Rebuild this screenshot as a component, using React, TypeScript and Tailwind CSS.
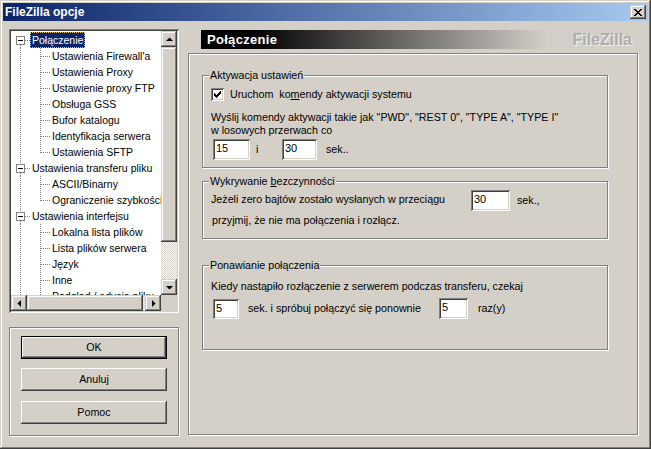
import React from "react";

const raised =
  "bg-[#d4d0c8] shadow-[inset_-1px_-1px_0_#404040,inset_1px_1px_0_#fff,inset_-2px_-2px_0_#808080,inset_2px_2px_0_#d4d0c8]";
const scrollBtn =
  "bg-[#d4d0c8] shadow-[inset_-1px_-1px_0_#404040,inset_1px_1px_0_#d4d0c8,inset_-2px_-2px_0_#808080,inset_2px_2px_0_#fff]";
const sunken =
  "shadow-[inset_1px_1px_0_#808080,inset_-1px_-1px_0_#fff,inset_2px_2px_0_#404040,inset_-2px_-2px_0_#d4d0c8]";
const etched = "border border-[#808080] shadow-[inset_1px_1px_0_#fff,1px_1px_0_#fff]";

type Row = { t: string; lvl: 0 | 1; sel?: boolean; first?: boolean; last?: boolean };

const rows: Row[] = [
  { t: "Połączenie", lvl: 0, sel: true, first: true },
  { t: "Ustawienia Firewall'a", lvl: 1 },
  { t: "Ustawienia Proxy", lvl: 1 },
  { t: "Ustawienie proxy FTP", lvl: 1 },
  { t: "Obsługa GSS", lvl: 1 },
  { t: "Bufor katalogu", lvl: 1 },
  { t: "Identyfikacja serwera", lvl: 1 },
  { t: "Ustawienia SFTP", lvl: 1, last: true },
  { t: "Ustawienia transferu pliku", lvl: 0 },
  { t: "ASCII/Binarny", lvl: 1 },
  { t: "Ograniczenie szybkości", lvl: 1, last: true },
  { t: "Ustawienia interfejsu", lvl: 0 },
  { t: "Lokalna lista plików", lvl: 1 },
  { t: "Lista plików serwera", lvl: 1 },
  { t: "Język", lvl: 1 },
  { t: "Inne", lvl: 1 },
  { t: "Podgląd / edycja pliku", lvl: 1 },
];

function Connector({ row }: { row: Row }) {
  const dot = { stroke: "#808080", strokeDasharray: "1 1", shapeRendering: "crispEdges" as const };
  if (row.lvl === 0) {
    return (
      <svg width="19" height="16" className="shrink-0">
        {!row.first && <line x1="9.5" y1="0" x2="9.5" y2="4" {...dot} />}
        <line x1="9.5" y1="13" x2="9.5" y2="16" {...dot} />
        <line x1="14" y1="8.5" x2="19" y2="8.5" {...dot} />
        <rect x="5.5" y="4.5" width="8" height="8" fill="#fff" stroke="#808080" shapeRendering="crispEdges" />
        <line x1="7" y1="8.5" x2="12" y2="8.5" stroke="#000" shapeRendering="crispEdges" />
      </svg>
    );
  }
  return (
    <svg width="39" height="16" className="shrink-0">
      <line x1="9.5" y1="0" x2="9.5" y2="16" {...dot} />
      <line x1="29.5" y1="0" x2="29.5" y2={row.last ? 9 : 16} {...dot} />
      <line x1="30" y1="8.5" x2="39" y2="8.5" {...dot} />
    </svg>
  );
}

function Arrow({ dir }: { dir: "up" | "down" | "left" | "right" }) {
  const pts = {
    up: "4,9 11,9 7.5,5.5",
    down: "4,6 11,6 7.5,9.5",
    left: "9,4 9,11 5.5,7.5",
    right: "6,4 6,11 9.5,7.5",
  }[dir];
  return (
    <svg width="15" height="15">
      <polygon points={pts} fill="#000" />
    </svg>
  );
}

function Field({ value, w, h = 21 }: { value: string; w: number; h?: number }) {
  return (
    <div
      className={`bg-white ${sunken} pl-[3px] pt-[2px] leading-[14px] text-[11px] text-black shrink-0`}
      style={{ width: w, height: h }}
    >
      {value}
    </div>
  );
}

function Group({ label, className, children }: { label: React.ReactNode; className: string; children: React.ReactNode }) {
  return (
    <div className={`relative w-[406px] ${etched} ${className}`}>
      <span className="absolute left-[6px] top-[-7px] bg-[#d4d0c8] px-[1px] leading-[13px]">{label}</span>
      {children}
    </div>
  );
}

function Button({ label, def }: { label: string; def?: boolean }) {
  return (
    <div className={`w-[146px] h-[23px] ${def ? "border border-black" : ""}`}>
      <div className={`h-full w-full flex items-center justify-center ${raised}`}>{label}</div>
    </div>
  );
}

export default function App() {
  return (
    <div className="w-[651px] h-[449px] bg-[#d4d0c8] p-[3px] shadow-[inset_-1px_-1px_0_#404040,inset_1px_1px_0_#d4d0c8,inset_-2px_-2px_0_#808080,inset_2px_2px_0_#fff] font-['Liberation_Sans',Arial,sans-serif] text-[10.7px] text-black overflow-hidden">
      {/* title bar */}
      <div className="h-[18px] flex items-center bg-[linear-gradient(to_right,#0a246a,#a6caf0)]">
        <span className="pl-[2px] text-white font-bold text-[12px] leading-[18px]">FileZilla opcje</span>
        <div className={`ml-auto mr-[2px] w-[16px] h-[14px] flex items-center justify-center ${scrollBtn}`}>
          <svg width="8" height="7" shapeRendering="crispEdges">
            <path d="M0 0h2v1h-2zM6 0h2v1h-2zM1 1h2v1h-2zM5 1h2v1h-2zM2 2h4v1h-4zM3 3h2v1h-2zM2 4h4v1h-4zM1 5h2v1h-2zM5 5h2v1h-2zM0 6h2v1h-2zM6 6h2v1h-2z" fill="#000" />
          </svg>
        </div>
      </div>

      <div className="flex pt-[8px] pl-[6px] gap-[9px]">
        {/* left column */}
        <div className="w-[170px] flex flex-col">
          <div className={`h-[284px] p-[2px] bg-[#d4d0c8] ${sunken}`}>
            <div className="grid grid-cols-[150px_16px] grid-rows-[264px_16px]">
              <div className="bg-white overflow-hidden pt-[1px] text-[10.5px]">
                {rows.map((r) => (
                  <div key={r.t} className="h-[16px] flex items-center whitespace-nowrap">
                    <Connector row={r} />
                    <span
                      className={`px-[2px] leading-[14px] h-[16px] flex items-center ${
                        r.sel ? "bg-[#0a246a] text-white outline-1 outline-dotted outline-[#e0c070] -outline-offset-1" : ""
                      }`}
                    >
                      {r.t}
                    </span>
                  </div>
                ))}
              </div>
              <div className="flex flex-col">
                <div className={`h-[16px] flex items-center justify-center ${scrollBtn}`}>
                  <Arrow dir="up" />
                </div>
                <div className={`h-[195px] ${scrollBtn}`} />
                <div className="flex-1 bg-[repeating-conic-gradient(#d4d0c8_0%_25%,#ffffff_0%_50%)] bg-size-[2px_2px]" />
                <div className={`h-[16px] flex items-center justify-center ${scrollBtn}`}>
                  <Arrow dir="down" />
                </div>
              </div>
              <div className="flex">
                <div className={`w-[16px] flex items-center justify-center ${scrollBtn}`}>
                  <Arrow dir="left" />
                </div>
                <div className={`w-[116px] ${scrollBtn}`} />
                <div className="flex-1 bg-[repeating-conic-gradient(#d4d0c8_0%_25%,#ffffff_0%_50%)] bg-size-[2px_2px]" />
                <div className={`w-[16px] flex items-center justify-center ${scrollBtn}`}>
                  <Arrow dir="right" />
                </div>
              </div>
              <div className="bg-[#d4d0c8]" />
            </div>
          </div>

          <div className={`mt-[14px] h-[109px] ${etched} px-[11px] pt-[8px] flex flex-col`}>
            <Button label="OK" def />
            <div className="mt-[9px]">
              <Button label="Anuluj" />
            </div>
            <div className="mt-[10px]">
              <Button label="Pomoc" />
            </div>
          </div>
        </div>

        {/* right column */}
        <div className="w-[450px] flex flex-col">
          <div className="ml-[13px] mt-[1px] w-[432px] h-[19px] flex items-center bg-[linear-gradient(to_right,#000_12%,#d2cfc8_80%)]">
            <span className="pl-[6px] text-white font-bold text-[13px] tracking-[0.3px]">Połączenie</span>
            <span className="ml-auto pr-[1px] font-bold text-[16px] text-[#adadad] [text-shadow:1px_1px_0_#f2f2f2]">
              FileZilla
            </span>
          </div>

          <div className={`mt-[4px] h-[382px] ${etched} px-[13px] pt-[21px]`}>
            <Group label="Aktywacja ustawień" className="h-[93px] pl-[8px] pt-[12px]">
              <div className="flex items-center h-[13px]">
                <div className={`w-[13px] h-[13px] bg-white ${sunken} flex items-center justify-center`}>
                  <svg width="7" height="7" shapeRendering="crispEdges">
                    <path d="M0 2h1v3h-1zM1 3h1v3h-1zM2 4h1v3h-1zM3 3h1v3h-1zM4 2h1v3h-1zM5 1h1v3h-1zM6 0h1v3h-1z" fill="#000" />
                  </svg>
                </div>
                <span className="ml-[6px] whitespace-pre">
                  Uruchom  ko<u>m</u>endy aktywacji systemu
                </span>
              </div>
              <p className="mt-[10px] leading-[13px]">
                Wyślij komendy aktywacji takie jak "PWD", "REST 0", "TYPE A", "TYPE I"
                <br />w losowych przerwach co
              </p>
              <div className="mt-[2px] flex items-center">
                <div className="ml-[2px]">
                  <Field value="15" w={37} />
                </div>
                <span className="ml-[6px] w-[26px]">i</span>
                <Field value="30" w={35} />
                <span className="ml-[9px]">sek..</span>
              </div>
            </Group>

            <Group
              label={
                <>
                  Wykrywanie <u>b</u>ezczynności
                </>
              }
              className="mt-[13px] h-[58px] pl-[8px] pt-[8px]"
            >
              <div className="flex items-center">
                <span className="w-[260px] pb-[2px]">Jeżeli zero bajtów zostało wysłanych w przeciągu</span>
                <Field value="30" w={39} />
                <span className="ml-[7px]">sek.,</span>
              </div>
              <p className="mt-[3px] leading-[13px] pl-[1px]">przyjmij, że nie ma połączenia i rozłącz.</p>
            </Group>

            <Group label="Ponawianie połączenia" className="mt-[26px] h-[85px] pl-[8px] pt-[14px]">
              <p className="leading-[13px]">Kiedy nastąpiło rozłączenie z serwerem podczas transferu, czekaj</p>
              <div className="mt-[5px] flex items-center">
                <div className="ml-[2px]">
                  <Field value="5" w={26} h={20} />
                </div>
                <span className="ml-[9px] w-[191px]">sek. i spróbuj połączyć się ponownie</span>
                <Field value="5" w={29} />
                <span className="ml-[10px]">raz(y)</span>
              </div>
            </Group>
          </div>
        </div>
      </div>
    </div>
  );
}
